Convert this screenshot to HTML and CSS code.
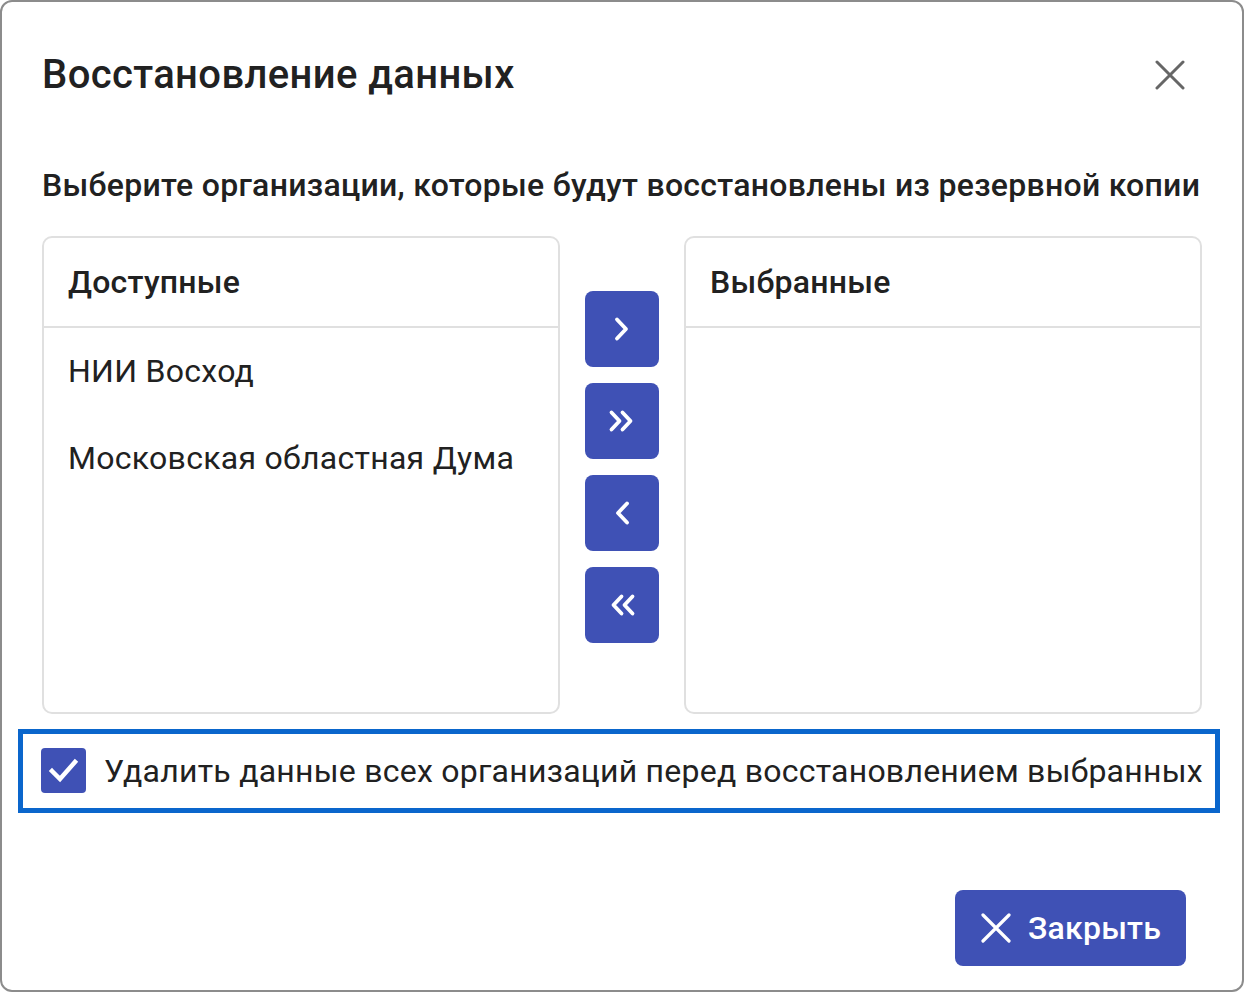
FILE: index.html
```html
<!DOCTYPE html>
<html lang="ru">
<head>
    <meta charset="UTF-8">
    <meta name="viewport" content="width=device-width, initial-scale=1.0">
    <title>Восстановление данных</title>
    <link rel="stylesheet" href="styles.css">
</head>
<body>
    <div class="dialog">
        <!-- Header -->
        <div class="dialog-header">
            <h1>Восстановление данных</h1>
            <button class="icon-close" type="button" aria-label="Закрыть">
                <svg width="30" height="30" viewBox="0 0 30 30"><path d="M2 2 L28 28 M28 2 L2 28" stroke="#666" stroke-width="3" stroke-linecap="round" fill="none"/></svg>
            </button>
        </div>

        <p class="subtitle">Выберите организации, которые будут восстановлены из резервной копии</p>

        <!-- Transfer list -->
        <div class="transfer">
            <div class="panel">
                <div class="panel-title">Доступные</div>
                <ul class="panel-list">
                    <li>НИИ Восход</li>
                    <li>Московская областная Дума</li>
                </ul>
            </div>

            <div class="transfer-actions">
                <button class="move-btn" type="button">
                    <svg width="30" height="30" viewBox="0 0 30 30"><polyline points="10,5.5 19,15 10,24.5" /></svg>
                </button>
                <button class="move-btn" type="button">
                    <svg width="30" height="30" viewBox="0 0 30 30"><polyline points="4.5,6.5 12.5,15 4.5,23.5" /><polyline points="15.5,6.5 23.5,15 15.5,23.5" /></svg>
                </button>
                <button class="move-btn" type="button">
                    <svg width="30" height="30" viewBox="0 0 30 30"><polyline points="20,5.5 11,15 20,24.5" /></svg>
                </button>
                <button class="move-btn" type="button">
                    <svg width="30" height="30" viewBox="0 0 30 30"><polyline points="14.5,6.5 6.5,15 14.5,23.5" /><polyline points="25.5,6.5 17.5,15 25.5,23.5" /></svg>
                </button>
            </div>

            <div class="panel">
                <div class="panel-title">Выбранные</div>
                <ul class="panel-list"></ul>
            </div>
        </div>

        <!-- Option -->
        <label class="option">
            <span class="checkbox">
                <svg width="45" height="45" viewBox="0 0 45 45"><polyline points="11,23 19,31 34,14" fill="none" stroke="#fff" stroke-width="4.5" stroke-linecap="square"/></svg>
            </span>
            <span class="option-text">Удалить данные всех организаций перед восстановлением выбранных</span>
        </label>

        <!-- Footer -->
        <div class="dialog-footer">
            <button class="btn-primary" type="button">
                <svg width="30" height="30" viewBox="0 0 30 30"><path d="M2 2 L28 28 M28 2 L2 28" stroke="#fff" stroke-width="3.2" stroke-linecap="round" fill="none"/></svg>
                <span>Закрыть</span>
            </button>
        </div>
    </div>
</body>
</html>
```

FILE: styles.css
```css
* { box-sizing: border-box; }
body { margin: 0; padding: 0; font-family: Roboto, "Noto Sans", Arial, sans-serif; color: #212121; background-color: #ffffff; }
.dialog { width: 1244px; height: 992px; border: 2px solid #8c8c8c; border-radius: 12px; padding: 0 40px; background-color: #ffffff; overflow: hidden; }

.dialog-header { display: flex; align-items: center; justify-content: space-between; padding-top: 49px; height: 97px; }
h1 { margin: 0; font-size: 40px; line-height: 48px; font-weight: 500; color: #212121; letter-spacing: 0.38px; }
.icon-close { width: 30px; height: 30px; padding: 0; border: none; background: none; margin-right: 17px; display: flex; }

.subtitle { margin: 66px 0 0; font-size: 32px; line-height: 40px; font-weight: 500; white-space: nowrap; letter-spacing: 0.28px; }

.transfer { display: flex; margin-top: 31px; height: 478px; }
.panel { width: 518px; border: 2px solid #e0e0e0; border-radius: 10px; display: flex; flex-direction: column; }
.panel-title { height: 90px; border-bottom: 2px solid #e0e0e0; padding: 0 24px; font-size: 32px; font-weight: 500; line-height: 88px; letter-spacing: 0.25px; }
.panel-list { list-style: none; margin: 0; padding: 0; }
.panel-list li { padding: 22px 24px; font-size: 32px; line-height: 43px; letter-spacing: 0.28px; }

.transfer-actions { width: 124px; display: flex; flex-direction: column; align-items: center; gap: 16px; padding-top: 55px; }
.move-btn { width: 74px; height: 76px; border: none; border-radius: 8px; background-color: #3f51b5; display: flex; align-items: center; justify-content: center; padding: 0; cursor: pointer; }
.move-btn polyline { fill: none; stroke: #ffffff; stroke-width: 3.8; stroke-linecap: round; stroke-linejoin: round; }

.option { display: flex; align-items: center; gap: 18px; width: 1202px; margin: 15px 0 0 -24px; border: 5px solid #0a66cc; padding: 14px 18px 15px; cursor: pointer; }
.checkbox { width: 45px; height: 45px; border-radius: 4px; background-color: #3f51b5; display: flex; flex-shrink: 0; }
.option-text { font-size: 32px; line-height: 40px; white-space: nowrap; letter-spacing: 0.24px; }

.dialog-footer { display: flex; justify-content: flex-end; margin-top: 77px; padding-right: 16px; }
.btn-primary { width: 231px; height: 76px; border: none; border-radius: 8px; background-color: #3f51b5; color: #ffffff; display: flex; align-items: center; gap: 17px; padding: 0 0 0 26px; font-family: Roboto, "Noto Sans", Arial, sans-serif; font-size: 32px; font-weight: 500; letter-spacing: 0.2px; cursor: pointer; }
```
